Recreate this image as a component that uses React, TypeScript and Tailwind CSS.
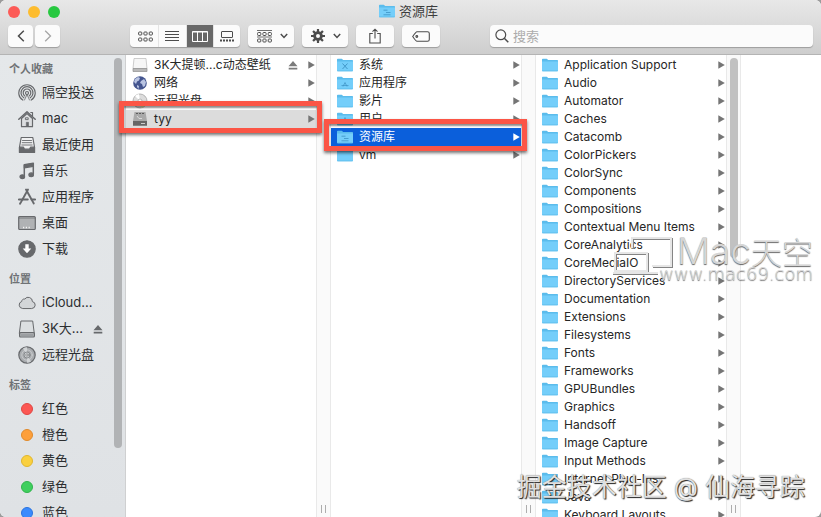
import type { ReactNode } from "react";

type Glyph = "tools" | "apps" | "user" | "library" | "none";

type Entry = {
  name: string;
  icon: ReactNode;
  eject?: boolean;
  state?: "path" | "active";
};

/* ---------- icons ---------- */

function Folder({ glyph = "none" }: { glyph?: Glyph }) {
  return (
    <svg viewBox="0 0 16 14" className="h-3.5 w-4 shrink-0">
      <path d="M0 1.600Q0 .8.8.8h3.800q.6 0 1 .6l.5.700h9.200q.7 0 .7.700V13H0z" fill="#5bbcec" />
      <path d="M0 3.400h16v9q0 .8-.8.8H.8q-.8 0-.8-.8z" fill="#74cefa" />
      <path d="M.3 12.900h15.400" stroke="#58b7e6" strokeWidth=".7" />
      <g stroke="#4298c9" strokeWidth="1" fill="none">
        {glyph === "tools" && <path d="M5.500 5.500l5 5.500M10.500 5.500l-5 5.500" />}
        {glyph === "apps" && <path d="M4.500 9.500h7M6 10.500L8 6.500l2 4" strokeWidth=".8" />}
        {glyph === "user" && <path d="M8 5.500v2.500M6.500 11h3M8 8v3" strokeWidth="1.400" />}
        {glyph === "library" && <path d="M4.500 6.200h4M7 8.500h4.500M4.500 10.800h7" strokeWidth=".9" />}
      </g>
    </svg>
  );
}

function Arrow() {
  return (
    <svg viewBox="0 0 7 8" className="h-2 w-[7px] shrink-0" fill="currentColor">
      <path d="M.3.2L6.800 4l-6.500 3.800z" />
    </svg>
  );
}

function Eject() {
  return (
    <svg viewBox="0 0 10 9" className="h-[9px] w-2.5 shrink-0" fill="currentColor">
      <path d="M5 0l4.500 5.200H.5zM.7 6.700h8.600v1.800H.7z" />
    </svg>
  );
}

function Globe() {
  return (
    <svg viewBox="0 0 16 16" className="h-4 w-4 shrink-0">
      <circle cx="8" cy="8" r="6.800" fill="#44558f" />
      <path d="M3 4l3-2 2 1-1 2.500-2 1L4 9 2 7zM9 6l3-2 2 3-1 4-2 1-1-3-2-1zM5 10l2 1-.5 3L5 12z" fill="#b9c4e2" />
    </svg>
  );
}

function Drive() {
  return (
    <svg viewBox="0 0 16 16" className="h-4 w-4 shrink-0">
      <path d="M2 1.500h12l1 10H1z" fill="#f6f6f6" stroke="#b9b9b9" strokeWidth=".7" />
      <path d="M1 11.500h14v3H1z" fill="#b9b9b9" stroke="#8f8f8f" strokeWidth=".7" />
    </svg>
  );
}

function HardDisk() {
  return (
    <svg viewBox="0 0 16 16" className="h-4 w-4 shrink-0">
      <path d="M2.500 1h11L15 10H1z" fill="#a9a9a9" />
      <path d="M4 2.500h8" stroke="#5c5c5c" strokeDasharray="2 1" />
      <path d="M5 5l2 2.500h3" stroke="#d9d9d9" fill="none" />
      <path d="M1 10h14v4.800H1z" fill="#666" />
      <path d="M9 12.500h4" stroke="#ccc" />
    </svg>
  );
}

function Disc() {
  return (
    <svg viewBox="0 0 16 16" className="h-4 w-4 shrink-0">
      <circle cx="8" cy="8" r="7" fill="#dcdcdc" stroke="#a4a4a4" strokeWidth=".8" />
      <path d="M8 8L3 3a7 7 0 0 1 4-2z" fill="#fff" />
      <path d="M8 8l5 5a7 7 0 0 1-4 2z" fill="#e4dfa9" />
      <circle cx="8" cy="8" r="2" fill="#fff" stroke="#aaa" strokeWidth=".8" />
    </svg>
  );
}

function SideIcon({ children }: { children: ReactNode }) {
  return (
    <svg
      viewBox="0 0 18 18"
      className="h-[18px] w-[18px] shrink-0"
      fill="none"
      stroke="#67696c"
      strokeWidth="1.200"
      strokeLinejoin="round"
      strokeLinecap="round"
    >
      {children}
    </svg>
  );
}

const airdrop = (
  <SideIcon>
    <path d="M4.800 16A8.200 8.200 0 1 1 13.200 16" />
    <path d="M5.800 13.800a6 6 0 1 1 6.400 0" />
    <path d="M6.800 11.900a3.800 3.800 0 1 1 4.400 0" />
    <circle cx="9" cy="9" r="1.500" />
    <path d="M9 10.500L6.500 16" strokeWidth=".8" />
    <path d="M9 10.500l2.500 5.500" strokeWidth=".8" />
  </SideIcon>
);

const home = (
  <SideIcon>
    <path d="M3.500 8.500v8.200h11V8.500L9 3.500z" fill="#dcdee0" />
    <path d="M.8 9.300L9 1.800l8.200 7.500" strokeWidth="1.500" />
    <path d="M12.800 2.500h1.700V6" />
    <path d="M8.300 16V12.300h2.200V16z" fill="#67696c" strokeWidth=".6" />
    <path d="M7.800 7.800h2.400v1.800H7.800z" strokeWidth=".9" />
  </SideIcon>
);

const recents = (
  <SideIcon>
    <path d="M3.200 1.500h11.600l1.700 9.500v5.500h-15V11z" fill="#f0f1f2" />
    <path d="M4.500 4.500h9M4.200 6.700h9.600M3.800 9h10.400" strokeWidth=".9" />
    <path d="M1.500 11.200h4l1 2h5l1-2h4v5.300h-15z" fill="#67696c" />
  </SideIcon>
);

const music = (
  <SideIcon>
    <path d="M6.300 14.200V2.700l9-1.500v11" strokeWidth="1.500" />
    <path d="M6.300 3l9-1.500v2.800l-9 1.500z" fill="#67696c" />
    <ellipse cx="4.300" cy="14.700" rx="2.300" ry="1.900" fill="#67696c" />
    <ellipse cx="13.200" cy="12.800" rx="2.300" ry="1.900" fill="#67696c" />
  </SideIcon>
);

const apps = (
  <SideIcon>
    <path d="M8 1.500l7.800 14" strokeWidth="1.900" />
    <path d="M10 1.500l-6.800 12.300-1.200 2" strokeWidth="1.900" strokeDasharray="4 .6" />
    <path d="M.8 11.500h9M13.500 11.500h3.700" strokeWidth="1.900" />
  </SideIcon>
);

const desktop = (
  <SideIcon>
    <rect x=".7" y="2.500" width="16.600" height="13" rx="1" fill="#b0b2b4" />
    <path d="M1 4h16" strokeWidth=".8" />
    <path d="M5 13.500h8" stroke="#f4f4f4" strokeWidth="1.500" strokeDasharray="1.200 1.600" strokeLinecap="butt" />
  </SideIcon>
);

const downloads = (
  <SideIcon>
    <circle cx="9" cy="9" r="8.200" fill="#67696c" />
    <path d="M7.300 4.300h3.400v4.200h2.600L9 13.300 4.700 8.500h2.600z" fill="#fff" stroke="none" />
  </SideIcon>
);

const cloud = (
  <SideIcon>
    <path d="M4.300 14.500a3.600 3.600 0 0 1-.6-7A2.600 2.600 0 0 1 6.800 5a4.200 4.200 0 0 1 7.600 2.600 3.500 3.500 0 0 1-.3 6.900z" fill="#d3d6d8" strokeWidth="1" />
  </SideIcon>
);

const external = (
  <SideIcon>
    <path d="M3.300 1h11.400l1.600 12.500H1.700z" fill="#dcdfe1" strokeWidth="1" />
    <rect x="1.600" y="12.700" width="14.800" height="4.300" rx="1" fill="#bfc2c5" />
    <path d="M3 15h12" strokeWidth=".8" />
  </SideIcon>
);

const remoteDisc = (
  <SideIcon>
    <circle cx="9" cy="9" r="8.200" fill="#a9acaf" />
    <path d="M9 9L5 2.500A7.500 7.500 0 0 1 9 1.300zM9 9l4 6.500a7.500 7.500 0 0 1-4 1.200z" fill="#d0d3d5" stroke="none" />
    <circle cx="9" cy="9" r="5.200" strokeWidth=".6" stroke="#d8dadc" />
    <circle cx="9" cy="9" r="3" fill="#c9cccf" strokeWidth=".6" />
    <circle cx="9" cy="9" r="1.200" fill="#eee" strokeWidth=".6" />
  </SideIcon>
);

/* ---------- data ---------- */

const favorites = [
  { name: "隔空投送", icon: airdrop },
  { name: "mac", icon: home },
  { name: "最近使用", icon: recents },
  { name: "音乐", icon: music },
  { name: "应用程序", icon: apps },
  { name: "桌面", icon: desktop },
  { name: "下载", icon: downloads },
];

const locations = [
  { name: "iCloud...", icon: cloud },
  { name: "3K大...", icon: external, eject: true },
  { name: "远程光盘", icon: remoteDisc },
];

const tags = [
  { name: "红色", icon: <Dot color="bg-[#fc5753] border-[#df4744]" /> },
  { name: "橙色", icon: <Dot color="bg-[#fd9f3b] border-[#e08a2c]" /> },
  { name: "黄色", icon: <Dot color="bg-[#fad03f] border-[#e0b62f]" /> },
  { name: "绿色", icon: <Dot color="bg-[#3fcf5e] border-[#31b44d]" /> },
  { name: "蓝色", icon: <Dot color="bg-[#3b8bfd] border-[#2a73de]" /> },
];

const computer: Entry[] = [
  { name: "3K大提顿...c动态壁纸", icon: <Drive />, eject: true },
  { name: "网络", icon: <Globe /> },
  { name: "远程光盘", icon: <Disc /> },
  { name: "tyy", icon: <HardDisk />, state: "path" },
];

const volume: Entry[] = [
  { name: "系统", icon: <Folder glyph="tools" /> },
  { name: "应用程序", icon: <Folder glyph="apps" /> },
  { name: "影片", icon: <Folder /> },
  { name: "用户", icon: <Folder glyph="user" /> },
  { name: "资源库", icon: <Folder glyph="library" />, state: "active" },
  { name: "vm", icon: <Folder /> },
];

const library: Entry[] = [
  "Application Support", "Audio", "Automator", "Caches", "Catacomb", "ColorPickers", "ColorSync",
  "Components", "Compositions", "Contextual Menu Items", "CoreAnalytics", "CoreMediaIO",
  "DirectoryServices", "Documentation", "Extensions", "Filesystems", "Fonts", "Frameworks",
  "GPUBundles", "Graphics", "Handsoff", "Image Capture", "Input Methods", "Internet Plug-Ins",
  "Java", "Keyboard Layouts",
].map((name) => ({ name, icon: <Folder /> }));

/* ---------- pieces ---------- */

function Dot({ color }: { color: string }) {
  return (
    <span className="flex w-[18px] shrink-0 justify-center">
      <span className={`h-3 w-3 rounded-full border ${color}`} />
    </span>
  );
}

function SideGroup({ title, items }: { title: string; items: { name: string; icon: ReactNode; eject?: boolean }[] }) {
  return (
    <section className="mb-[7px]">
      <h2 className="pb-px pl-[9px] text-[11px] leading-5 font-bold text-[#6f7275]">{title}</h2>
      <ul>
        {items.map((item) => (
          <li key={item.name}>
            <button className="flex h-[26px] w-full items-center gap-1.5 pr-[11px] pl-[18px] text-[13px] whitespace-nowrap text-[#2c2e30]">
              {item.icon}
              <span className="flex-1 text-left">{item.name}</span>
              {item.eject && <span className="text-[#67696c]"><Eject /></span>}
            </button>
          </li>
        ))}
      </ul>
    </section>
  );
}

function Column({ label, items }: { label: string; items: Entry[] }) {
  return (
    <ul aria-label={label} className="w-[190px] shrink-0 pt-px">
      {items.map((item) => (
        <li key={item.name} className="relative">
          <button
            className={`flex h-[18px] w-full items-center gap-1.5 pr-px pl-1.5 text-xs whitespace-nowrap ${
              item.state === "active" ? "bg-[#0b5fdb] text-white" : item.state === "path" ? "bg-[#dcdcdc] text-[#262626]" : "text-[#262626]"
            }`}
          >
            {item.icon}
            <span className="flex-1 text-left">{item.name}</span>
            {item.eject && <span className="mr-1 text-[#7b7b7b]"><Eject /></span>}
            <span className={item.state === "active" ? "text-white" : "text-[#757575]"}><Arrow /></span>
          </button>
          {/* callout frame round the selected row */}
          {item.state && (
            <div className="pointer-events-none absolute -top-[9px] -right-1.5 -bottom-[5px] -left-[7px] z-10 border-[5px] border-[#fb5546] shadow-[0_2px_3px_rgba(0,0,0,0.55),inset_0_2px_2px_rgba(0,0,0,0.45)]" />
          )}
        </li>
      ))}
    </ul>
  );
}

function Gutter({ scroll = false }: { scroll?: boolean }) {
  return (
    <div className="flex w-[15px] shrink-0 flex-col items-center justify-between border-x border-[#e9e9e9] bg-[#fafafa] pt-[3px] pb-1">
      <div className={scroll ? "h-[200px] w-2 rounded-full bg-[#c1c1c1]" : ""} />
      <div className="h-2 w-[5px] border-x border-[#adadad]" />
    </div>
  );
}

const tool = "flex h-[22px] items-center justify-center rounded bg-[#fbfbfb] text-[#4c4c4c] shadow-[0_1px_1px_rgba(0,0,0,0.25)]";

function Chevron() {
  return (
    <svg viewBox="0 0 8 6" className="h-1.5 w-2" fill="none" stroke="currentColor" strokeWidth="1.500">
      <path d="M.8 1L4 4.500 7.200 1" />
    </svg>
  );
}

function Squares({ y }: { y: number }) {
  return (
    <>
      <rect x=".6" y={y} width="3.200" height="3" rx=".8" />
      <rect x="5.900" y={y} width="3.200" height="3" rx=".8" />
      <rect x="11.200" y={y} width="3.200" height="3" rx=".8" />
    </>
  );
}

function Toolbar() {
  return (
    <div className="flex h-[30px] items-start gap-2 px-2 pt-px">
      <div className="mr-[62px] flex gap-0.5">
        <button aria-label="后退" className={`${tool} w-[25px]`}>
          <svg viewBox="0 0 8 12" className="h-3 w-2" fill="none" stroke="currentColor" strokeWidth="1.500">
            <path d="M6.800.8L1.500 6l5.300 5.200" />
          </svg>
        </button>
        <button aria-label="前进" className={`${tool} w-[25px]`}>
          <svg viewBox="0 0 8 12" className="h-3 w-2" fill="none" stroke="#a5a5a5" strokeWidth="1.300">
            <path d="M1.200.8L6.500 6l-5.300 5.200" />
          </svg>
        </button>
      </div>

      <div className={`${tool} w-[110px] shrink-0 divide-x divide-[#e4e4e4] overflow-hidden`}>
        <button aria-label="图标" className="flex h-full flex-1 items-center justify-center pl-0.5">
          <svg viewBox="0 0 15 11" className="h-[11px] w-[15px]" fill="none" stroke="currentColor">
            <Squares y={1} />
            <Squares y={7} />
          </svg>
        </button>
        <button aria-label="列表" className="flex h-full flex-1 items-center justify-center">
          <svg viewBox="0 0 14 11" className="h-[11px] w-3.5" stroke="currentColor">
            <path d="M0 .5h14M0 3.500h14M0 6.500h14M0 9.500h14" />
          </svg>
        </button>
        <button aria-label="分栏" aria-pressed="true" className="flex h-full flex-1 items-center justify-center bg-[#686868]">
          <svg viewBox="0 0 16 11" className="h-[11px] w-4" fill="none" stroke="#fff">
            <path d="M.5.500h15v10H.5zM5.500.500v10M10.500.500v10" />
            <path d="M.5 1h15" />
          </svg>
        </button>
        <button aria-label="画廊" className="flex h-full flex-1 items-center justify-center">
          <svg viewBox="0 0 14 11" className="h-[11px] w-3.5" fill="none" stroke="currentColor">
            <rect x="1.500" y=".5" width="11" height="6" rx=".5" />
            <path d="M0 9.500h14" strokeWidth="2" strokeDasharray="2 1" />
          </svg>
        </button>
      </div>

      <button aria-label="分组" className={`${tool} w-[46px] shrink-0 gap-2 pl-0.5`}>
        <svg viewBox="0 0 15 13" className="h-[13px] w-[15px]" fill="none" stroke="currentColor">
          <path d="M0 .5h15M0 7h15" strokeWidth=".8" />
          <Squares y={2.5} />
          <Squares y={9} />
        </svg>
        <Chevron />
      </button>

      <button aria-label="操作" className={`${tool} w-[46px] shrink-0 gap-2 pl-0.5`}>
        <svg viewBox="0 0 14 14" className="h-3.5 w-3.5" fill="none" stroke="currentColor">
          <circle cx="7" cy="7" r="3.400" strokeWidth="2.800" />
          <path
            d="M7 0v3M7 11v3M0 7h3M11 7h3M2.050 2.050l2.100 2.100M9.850 9.850l2.100 2.100M2.050 11.950l2.100-2.100M9.850 4.150l2.100-2.100"
            strokeWidth="2.200"
          />
        </svg>
        <Chevron />
      </button>

      <button aria-label="共享" className={`${tool} w-[38px] shrink-0`}>
        <svg viewBox="0 0 12 16" className="h-4 w-3" fill="none" stroke="currentColor" strokeWidth="1.100">
          <path d="M3.800 5.500H.8v9.500h10.400V5.500h-3M6 10.500V1.200M3.500 3.700L6 1.200l2.500 2.500" />
        </svg>
      </button>

      <button aria-label="标记" className={`${tool} w-[38px] shrink-0`}>
        <svg viewBox="0 0 18 11" className="h-[11px] w-[18px]" fill="none" stroke="currentColor" strokeWidth="1.100">
          <path d="M5 .7h10.500q1.800 0 1.800 1.800v6q0 1.800-1.800 1.800H5Q4 10.300.7 5.500 4 .7 5 .7z" />
          <circle cx="4.800" cy="5.500" r=".9" />
        </svg>
      </button>

      <label className={`${tool} ml-[42px] min-w-0 flex-1 gap-1 px-[5px]`}>
        <svg viewBox="0 0 14 14" className="h-3.5 w-3.5 shrink-0" fill="none" stroke="currentColor" strokeWidth="1.200">
          <circle cx="5.800" cy="5.800" r="4.900" />
          <path d="M9.300 9.300l4 4" strokeWidth="1.500" />
        </svg>
        <input
          type="search"
          aria-label="搜索"
          placeholder="搜索"
          className="min-w-0 flex-1 bg-transparent text-[13px] leading-5 outline-none placeholder:text-[#acacac]"
        />
      </label>
    </div>
  );
}

export default function App() {
  return (
    <div className="h-screen bg-[#9b9b9b] font-['Inter','Noto_Sans_CJK_SC',sans-serif]">
      <div className="relative flex h-full flex-col overflow-hidden rounded-md bg-white">
        <header className="h-[55px] shrink-0 border-b border-[#b4b4b4] bg-linear-to-b from-[#e8e8e8] to-[#cecece]">
          <div className="grid h-6 grid-cols-[1fr_auto_1fr] items-center">
            <div className="flex gap-2 pl-2">
              <button aria-label="关闭" className="h-3 w-3 rounded-full bg-[#fc5b57]" />
              <button aria-label="最小化" className="h-3 w-3 rounded-full bg-[#fdbc2e]" />
              <button aria-label="缩放" className="h-3 w-3 rounded-full bg-[#27c840]" />
            </div>
            <h1 className="flex items-center gap-1 pr-1 pb-0.5 text-[13px] leading-5 text-[#3d3d3d]">
              <Folder glyph="library" />
              资源库
            </h1>
          </div>
          <Toolbar />
        </header>

        <div className="flex min-h-0 flex-1 overflow-hidden">
          <aside className="flex w-[126px] shrink-0 border-r border-[#cfd0d1] bg-linear-to-b from-[#e5e8ea] to-[#dfe2e5] pr-[3px]">
            <nav className="min-w-0 flex-1 pt-1">
              <SideGroup title="个人收藏" items={favorites} />
              <SideGroup title="位置" items={locations} />
              <SideGroup title="标签" items={tags} />
            </nav>
            <div className="mt-[3px] mb-[69px] w-2 rounded-full bg-[#b1b3b5]" />
          </aside>

          <Column label="电脑" items={computer} />
          <Gutter />
          <Column label="tyy" items={volume} />
          <Gutter />
          <Column label="资源库" items={library} />
          <Gutter scroll />
        </div>

        {/* watermarks over the window */}
        <div className="pointer-events-none absolute top-[230px] right-2 z-20 flex flex-col items-end font-light text-[#d6d6d6] [text-shadow:0_1px_1px_#666]">
          <div className="flex items-center gap-1">
            <svg viewBox="0 0 60 44" className="h-11 w-[60px] overflow-visible" fill="none">
              <g stroke="#858585" strokeWidth="2">
                <path d="M20 19V9h39v28H40" />
                <path d="M3 24h32v18H3zM0 44h45" />
              </g>
              <g stroke="#e6e6e6" strokeWidth="2">
                <path d="M19 18V8h39v28H39" />
                <path d="M2 23h32v18H2zM0 43h45" />
              </g>
            </svg>
            <span className="text-[37px] leading-10">Mac<span className="text-[31px]">天空</span></span>
          </div>
          <span className="-mt-3 font-['DejaVu_Sans',sans-serif] text-lg leading-6 font-extralight">www.mac69.com</span>
        </div>
        <div className="pointer-events-none absolute right-4 bottom-3 z-20 text-[25px] leading-9 text-[#e0e0e0] [text-shadow:1px_1px_1px_#222,0_0_1px_#777]">
          掘金技术社区 @ 仙海寻踪
        </div>
      </div>
    </div>
  );
}
